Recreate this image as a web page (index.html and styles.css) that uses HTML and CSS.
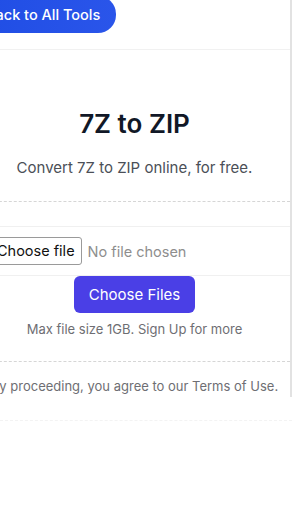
FILE: index.html
```html
<!DOCTYPE html>
<html lang="en">
<head>
    <meta charset="UTF-8">
    <meta name="viewport" content="width=device-width, initial-scale=1.0">
    <title>7Z to ZIP</title>
    <link rel="stylesheet" href="styles.css">
</head>
<body>

    <div class="page">
        <div class="topbar">
            <a class="back-button" href="#">Back to All Tools</a>
        </div>

        <div class="tool-head">
            <h1 class="tool-title">7Z to ZIP</h1>
            <p class="tool-sub">Convert 7Z to ZIP online, for free.</p>
        </div>

        <div class="upload">
            <div class="file-box">
                <label class="file-picker">
                    <input type="file" class="file-input">
                    <span class="file-button">Choose file</span>
                    <span class="file-name">No file chosen</span>
                </label>
            </div>
            <button class="choose-button">Choose Files</button>
            <p class="limit">Max file size 1GB. Sign Up for more</p>
        </div>

        <p class="terms">By proceeding, you agree to our Terms of Use.</p>
    </div>

    <div class="footer-line"></div>

    <script>
        // show the picked file name next to the button
        const fileInput = document.querySelector('.file-input');
        const fileName = document.querySelector('.file-name');

        fileInput.addEventListener('change', () => {
            fileName.textContent = fileInput.files.length
                ? fileInput.files[0].name
                : 'No file chosen';
        });
    </script>
</body>
</html>
```

FILE: styles.css
```css
/* base */
body {
    margin: 0;
    background-color: #ffffff;
    font-family: Inter, "Noto Sans", Arial, sans-serif;
    overflow: hidden;
}

.page {
    width: 311px;
    margin-left: -21px;
    border-right: 2px solid #e2e2e2;
}

/* top bar with the back link */
.topbar {
    height: 49px;
    border-bottom: 1px solid #f1f1f1;
}

.back-button {
    display: inline-flex;
    align-items: center;
    height: 37px;
    margin-top: -4px;
    margin-left: -13px;
    padding: 0 16px 0 20px;
    border-radius: 0 18px 18px 0;
    background: linear-gradient(90deg, #1f4de4, #2a55ea);
    color: #ffffff;
    font-size: 14.5px;
    font-weight: 500;
    text-decoration: none;
}

/* heading */
.tool-head {
    padding: 57px 0 23px;
    text-align: center;
    border-bottom: 1px dashed #d6d6d6;
}

.tool-title {
    margin: 0;
    font-size: 26px;
    line-height: 34px;
    font-weight: 600;
    color: #111827;
}

.tool-sub {
    margin: 17px 0 0;
    font-size: 15px;
    line-height: 20px;
    color: #4b4f57;
}

/* upload area */
.upload {
    padding-top: 24px;
    text-align: center;
    border-bottom: 1px dashed #d6d6d6;
}

.file-box {
    height: 48px;
    display: flex;
    align-items: center;
    padding-left: 11px;
    border-top: 1px solid #f0f0f0;
    border-bottom: 1px solid #f0f0f0;
}

.file-picker {
    display: inline-flex;
    align-items: center;
    gap: 6px;
    cursor: pointer;
}

.file-input {
    display: none;
}

.file-button {
    padding: 4px 6px;
    border: 1px solid #9a9a9a;
    border-radius: 3px;
    background-color: #ffffff;
    color: #111111;
    font-size: 14.5px;
    line-height: 18px;
}

.file-name {
    font-size: 14.5px;
    color: #8e8e8e;
}

.choose-button {
    height: 37px;
    padding: 0 15px;
    border: none;
    border-radius: 6px;
    background-color: #4a3fe6;
    color: #ffffff;
    font-family: inherit;
    font-size: 15px;
    cursor: pointer;
}

.limit {
    margin: 6px 0 0;
    padding-bottom: 22px;
    font-size: 13px;
    line-height: 20px;
    color: #6e6e73;
}

/* terms line */
.terms {
    margin: 0;
    padding: 15px 0 2px;
    text-align: center;
    font-size: 13px;
    line-height: 18px;
    color: #6e6e73;
}

.footer-line {
    margin-top: 23px;
    border-top: 1px dashed #f3f3f3;
}
```
